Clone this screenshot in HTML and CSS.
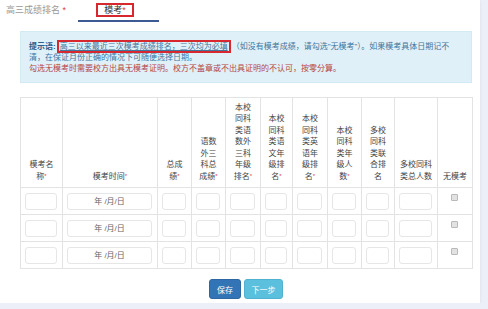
FILE: index.html
```html
<!DOCTYPE html>
<html lang="zh-CN">
<head>
    <meta charset="UTF-8">
    <meta name="viewport" content="width=device-width, initial-scale=1.0">
    <title>高三成绩排名 - 模考</title>
    <link rel="stylesheet" href="styles.css">
</head>
<body>
    <div class="page">
        <!-- Tabs -->
        <div class="tabs">
            <span class="tab-label">高三成绩排名 <i class="req">*</i></span>
            <span class="tab active"><span class="mark mark-tab">模考<i class="req">*</i></span></span>
        </div>

        <!-- Tip box -->
        <div class="tip">
            <b>提示语:</b><span class="mark mark-tip">高三以来最近三次模考成绩排名，三次均为必填</span>（如没有模考成绩，请勾选"无模考"）。如果模考具体日期记不<br>清，在保证月份正确的情况下可随便选择日期。<br>
            <span class="warn">勾选无模考时需要校方出具无模考证明。校方不盖章或不出具证明的不认可，按零分算。</span>
        </div>

        <table class="grid">
            <colgroup>
                <col class="w42"><col class="w95"><col class="w34"><col class="w34"><col class="w35"><col class="w32">
                <col class="w35"><col class="w34"><col class="w33"><col class="w43"><col class="w35">
            </colgroup>
            <thead>
                <tr>
                    <th>模考名<br>称<i class="req">*</i></th>
                    <th>模考时间<i class="req">*</i></th>
                    <th>总成<br>绩<i class="req">*</i></th>
                    <th>语数<br>外三<br>科总<br>成绩<i class="req">*</i></th>
                    <th>本校<br>同科<br>类语<br>数外<br>三科<br>年级<br>排名<i class="req">*</i></th>
                    <th>本校<br>同科<br>类语<br>文年<br>级排<br>名<i class="req">*</i></th>
                    <th>本校<br>同科<br>类英<br>语年<br>级排<br>名<i class="req">*</i></th>
                    <th>本校<br>同科<br>类年<br>级人<br>数<i class="req">*</i></th>
                    <th>多校<br>同科<br>类联<br>合排<br>名</th>
                    <th>多校同科<br>类总人数</th>
                    <th>无模考</th>
                </tr>
            </thead>
            <tbody>
                <tr>
                    <td><span class="field"></span></td>
                    <td><span class="field date">年 /月/日</span></td>
                    <td><span class="field"></span></td>
                    <td><span class="field"></span></td>
                    <td><span class="field"></span></td>
                    <td><span class="field"></span></td>
                    <td><span class="field"></span></td>
                    <td><span class="field"></span></td>
                    <td><span class="field"></span></td>
                    <td><span class="field"></span></td>
                    <td class="check-cell"><span class="check"></span></td>
                </tr>
                <tr>
                    <td><span class="field"></span></td>
                    <td><span class="field date">年 /月/日</span></td>
                    <td><span class="field"></span></td>
                    <td><span class="field"></span></td>
                    <td><span class="field"></span></td>
                    <td><span class="field"></span></td>
                    <td><span class="field"></span></td>
                    <td><span class="field"></span></td>
                    <td><span class="field"></span></td>
                    <td><span class="field"></span></td>
                    <td class="check-cell"><span class="check"></span></td>
                </tr>
                <tr>
                    <td><span class="field"></span></td>
                    <td><span class="field date">年 /月/日</span></td>
                    <td><span class="field"></span></td>
                    <td><span class="field"></span></td>
                    <td><span class="field"></span></td>
                    <td><span class="field"></span></td>
                    <td><span class="field"></span></td>
                    <td><span class="field"></span></td>
                    <td><span class="field"></span></td>
                    <td><span class="field"></span></td>
                    <td class="check-cell"><span class="check"></span></td>
                </tr>
            </tbody>
        </table>

        <div class="actions">
            <button class="btn btn-save">保存</button>
            <button class="btn btn-next">下一步</button>
        </div>
    </div>
</body>
</html>
```

FILE: styles.css
```css
body {
    margin: 0;
    background-color: #eceff8;
    font-family: "Liberation Sans", "Noto Sans CJK SC", sans-serif;
    color: #333;
}
.page {
    width: 480px;
    height: 303px;
    box-sizing: border-box;
    padding: 0 8px 0 20px;
    background-color: #fff;
    box-shadow: 0 1px 3px rgba(0, 0, 0, 0.08);
}
.req {
    font-style: normal;
    color: #e4393c;
}

/* Tabs */
.tabs {
    display: flex;
    height: 22px;
    margin-left: -14px;
}
.tab-label {
    width: 72px;
    font-size: 9px;
    line-height: 20px;
    color: #9a9a9a;
}
.tab {
    width: 81px;
    box-sizing: border-box;
    padding-right: 7px;
    border-bottom: 2px solid #3e5a95;
    display: flex;
    justify-content: center;
    align-items: center;
}
.mark {
    border: 2px solid #d7282f;
}
.mark-tab {
    font-size: 9px;
    line-height: 10px;
    padding: 0 6px;
    color: #333;
}

/* Tip box */
.tip {
    margin-top: 9px;
    height: 52px;
    box-sizing: border-box;
    padding: 9px 6px 0 8px;
    background-color: #e0f0f9;
    border: 1px solid #d3e9f4;
    font-size: 8px;
    line-height: 11px;
    color: #40759c;
    white-space: nowrap;
}
.tip b {
    color: #2f5f8a;
}
.mark-tip {
    padding: 0 1px;
    margin: 0 1px;
    text-decoration: underline;
}
.warn {
    color: #b5453f;
}

/* Table */
.grid {
    margin-top: 14px;
    width: 452px;
    table-layout: fixed;
    border-collapse: collapse;
    font-size: 8px;
}
.w32 { width: 32px; }
.w33 { width: 33px; }
.w34 { width: 34px; }
.w35 { width: 35px; }
.w42 { width: 42px; }
.w43 { width: 43px; }
.w95 { width: 95px; }
.grid th,
.grid td {
    border: 1px solid #e3e3e3;
}
.grid thead tr {
    height: 90px;
}
.grid th {
    vertical-align: bottom;
    text-align: center;
    font-weight: normal;
    line-height: 11.5px;
    padding: 0 0 5px;
    color: #444;
    white-space: nowrap;
}
.grid th .req {
    font-size: 6px;
    vertical-align: top;
}
.grid tbody tr {
    height: 27px;
}
.grid td {
    padding: 0 5px 0 4px;
    vertical-align: middle;
}
.field {
    display: block;
    height: 17px;
    box-sizing: border-box;
    border: 1px solid #e6e6e6;
    border-radius: 3px;
    font-size: 8px;
    line-height: 15px;
    color: #666;
}
.date {
    text-align: center;
}
.check-cell {
    vertical-align: top !important;
    text-align: center;
}
.check {
    display: inline-block;
    width: 7px;
    height: 7px;
    margin-top: 6px;
    box-sizing: border-box;
    border: 1px solid #b9b9b9;
    border-radius: 1px;
    background-color: #e2e2e2;
}

/* Buttons */
.actions {
    display: flex;
    justify-content: center;
    gap: 3px;
    margin-top: 10px;
}
.btn {
    height: 20px;
    padding: 0;
    border-radius: 3px;
    font-family: inherit;
    font-size: 8px;
    color: #fff;
}
.btn-save {
    width: 32px;
    background-color: #3274b5;
    border: 1px solid #2c67a3;
}
.btn-next {
    width: 39px;
    background-color: #5bc0de;
    border: 1px solid #50b2d0;
}
```
